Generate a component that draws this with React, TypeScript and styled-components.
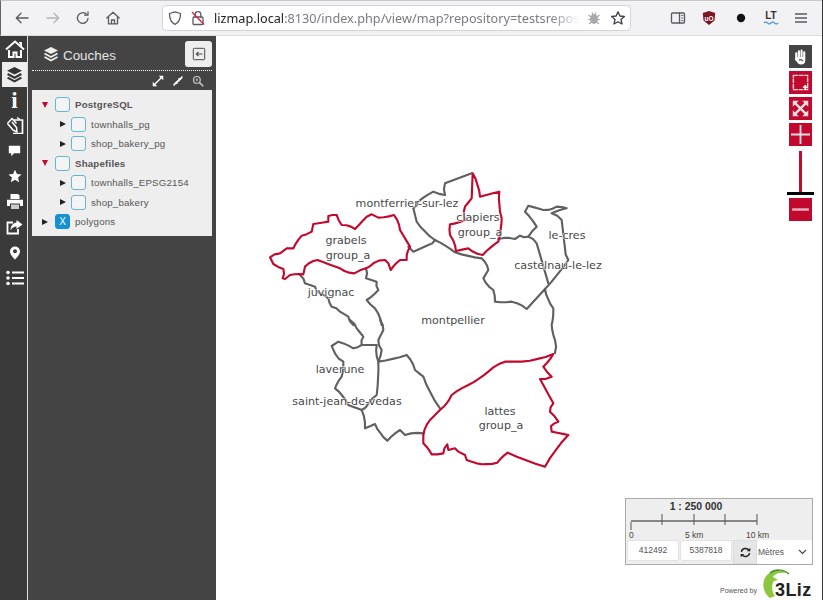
import React from "react";
import styled, { createGlobalStyle } from "styled-components";

const Global = createGlobalStyle`
  html, body { margin: 0; padding: 0; height: 100%; background: #fff; overflow: hidden; }
  #root { height: 100%; }
  * { box-sizing: border-box; }
`;

const Page = styled.div`
  width: 823px; height: 600px; display: flex; flex-direction: column;
  border-right: 1px solid #333; font-family: "Liberation Sans", Arial, sans-serif;
`;
const BrowserBar = styled.div`
  height: 36px; background: #f2f2f4; border-top: 1px solid #c8c8c8; border-bottom: 1px solid #ddd; border-left: 1px solid #666;
  display: flex; align-items: center; padding-left: 11px; flex: none;
`;
const NavButton = styled.div<{ $w?: number; $ml?: number }>`
  width: ${p => p.$w ?? 31}px; height: 22px; margin-left: ${p => p.$ml ?? 0}px; display: flex; align-items: center; justify-content: center; flex: none;
  svg { display: block; }
`;
const UrlBox = styled.div`
  width: 469px; height: 26px; margin-left: 30px; background: #fff; border: 1px solid #d4d4d8; border-radius: 4px;
  display: flex; align-items: center; padding-left: 3px; flex: none;
  font-family: "Noto Sans", "Open Sans", sans-serif; font-size: 12.7px; color: #7a7a80;
`;
const UrlText = styled.div`
  width: 366px; margin-left: 7px; overflow: hidden; white-space: nowrap; flex: none;
  -webkit-mask-image: linear-gradient(to right, #000 92%, transparent);
  mask-image: linear-gradient(to right, #000 92%, transparent);
  b { font-weight: 400; color: #222; }
`;
const UrlIcon = styled.div<{ $ml?: number }>`
  width: 18px; height: 18px; margin-left: ${p => p.$ml ?? 0}px; display: flex; align-items: center; justify-content: center; flex: none;
`;
const Main = styled.div`
  flex: 1; display: flex; min-height: 0;
`;
const Dock = styled.div`
  width: 28px; background: #3a3a3a; border-right: 1px solid #ddd; flex: none; padding-left: 2px;
`;
const DockItem = styled.div<{ $active?: boolean }>`
  height: 25.5px; display: flex; align-items: center; justify-content: center;
  background: ${p => (p.$active ? "#eeeeee" : "transparent")};
`;
const InfoGlyph = styled.span`
  font-family: "Liberation Serif", serif; font-weight: 700; font-size: 23px; line-height: 1; color: #fff; margin-top: 2px;
`;
const Panel = styled.div`
  width: 188px; background: #444; flex: none; padding: 0 4px; display: flex; flex-direction: column;
`;
const PanelHead = styled.div`
  height: 35px; border-bottom: 1px dotted #fff; display: flex; align-items: center; padding-left: 11px; flex: none;
  padding-top: 2px;
`;
const PanelTitle = styled.div`
  color: #e4e4e4; font-size: 13.4px; margin-left: 4px; flex: 1; margin-top: 2px;
`;
const CollapseBtn = styled.div`
  width: 27px; height: 26px; background: #eee; border-radius: 3px; display: flex; align-items: center; justify-content: center;
`;
const TreeActions = styled.div`
  height: 19px; display: flex; justify-content: flex-end; align-items: center; gap: 8px; padding-right: 8px; flex: none;
`;
const Tree = styled.div`
  background: #eeeeee; padding-top: 5px; height: 146px; flex: none;
`;
const Row = styled.div<{ $level: number }>`
  height: 19.5px; display: flex; align-items: center; padding-left: ${p => (p.$level ? 28 : 10)}px;
`;
const Arrow = styled.div<{ $open?: boolean; $level: number }>`
  flex: none; width: ${p => (p.$level ? 11 : 13)}px; display: flex; align-items: center;
  &::before {
    content: ""; display: block; width: 0; height: 0;
    ${p => p.$open
      ? "border-left: 3.5px solid transparent; border-right: 3.5px solid transparent; border-top: 6px solid #c1092e;"
      : "border-top: 3.5px solid transparent; border-bottom: 3.5px solid transparent; border-left: 6px solid #222;"}
  }
`;
const Check = styled.div<{ $filled?: boolean }>`
  width: 15px; height: 15px; border: 1px solid ${p => (p.$filled ? "#1591d3" : "#67b5cf")}; border-radius: 3px; flex: none;
  background: ${p => (p.$filled ? "#1591d3" : "#f4f4f4")};
  color: #fff; font-size: 10px; line-height: 13px; text-align: center;
`;
const Label = styled.div<{ $bold?: boolean }>`
  margin-left: 5px; font-size: 9.7px; color: #555; white-space: nowrap; letter-spacing: .2px;
  font-weight: ${p => (p.$bold ? 700 : 400)};
`;
const MapArea = styled.div`
  flex: 1; position: relative; background: #fff; overflow: hidden;
`;
const MapSvg = styled.svg`
  position: absolute; left: 0; top: 0; width: 606px; height: 564px; display: block;
`;
const MapLabel = styled.text`
  font-family: "DejaVu Sans", sans-serif; font-size: 11.1px; fill: #484848; text-anchor: middle;
  stroke: #fff; stroke-width: 1.5px; paint-order: stroke; stroke-opacity: .7;
`;
const Controls = styled.div`
  position: absolute; top: 9px; right: 10px; width: 23px; display: flex; flex-direction: column; align-items: center;
`;
const CtlBtn = styled.div<{ $dark?: boolean }>`
  width: 23px; height: 23px; background: ${p => (p.$dark ? "#444" : "#c1092e")};
  margin-top: 3px; display: flex; align-items: center; justify-content: center;
  &:first-child { margin-top: 0; }
`;
const SliderTrack = styled.div`
  width: 2.5px; height: 41px; background: #c1092e; margin-top: 5px;
`;
const SliderHandle = styled.div`
  width: 27px; height: 3px; background: #000; flex: none;
`;
const ScaleBox = styled.div`
  position: absolute; right: 9px; bottom: 35px; width: 188px; height: 67px; background: #eee; border: 1px solid #aaa;
  display: flex; flex-direction: column;
`;
const ScaleTitle = styled.div`
  font-size: 10.4px; font-weight: 700; color: #333; text-align: center; height: 14px; line-height: 14px; padding-right: 46px; margin-top: 1px; flex: none;
`;
const ScaleLine = styled.svg`
  display: block; width: 186px; height: 26px; flex: none;
`;
const ScaleLabel = styled.text`
  font-family: "Liberation Sans", sans-serif; font-size: 8.5px; fill: #444;
`;
const CoordRow = styled.div`
  display: flex; height: 24px; align-items: stretch; padding-left: 1px; flex: none;
`;
const CoordBox = styled.div<{ $w: number }>`
  width: ${p => p.$w}px; height: 21px; background: #fff; border: 1px solid #e2e2e2; border-radius: 3px; margin-right: 1px;
  font-size: 8.5px; color: #555; text-align: center; line-height: 18px;
`;
const RefreshBtn = styled.div`
  width: 24px; height: 24px; background: #e6e6e6; border: 1px solid #ddd; display: flex; align-items: center; justify-content: center; flex: none;
`;
const UnitSelect = styled.div`
  flex: 1; height: 24px; background: #fff; border-radius: 3px; font-size: 8.5px; color: #555; display: flex; align-items: center;
  justify-content: space-between; padding: 0 5px 0 1px;
`;
const Powered = styled.div`
  position: absolute; right: 2px; bottom: 0; display: flex; align-items: flex-end; width: 100px; height: 32px;
`;
const PoweredText = styled.div`
  font-size: 7px; color: #555; margin: 0 0 6px 0; white-space: nowrap; flex: none; width: 42px;
`;
const LogoWrap = styled.div`
  position: relative; width: 56px; height: 32px; flex: none;
  svg { position: absolute; left: 0; top: 0; }
`;
const LogoText = styled.div`
  position: absolute; left: 13px; bottom: 0; font-size: 18px; font-weight: 700; color: #222; letter-spacing: .4px; line-height: 19px;
`;

const stroke = { fill: "none", stroke: "#5a5a60", strokeWidth: 1.3, strokeLinecap: "round" as const, strokeLinejoin: "round" as const };

const Ico = ({ children, s = 16 }: { children: React.ReactNode; s?: number }) => (
  <svg width={s} height={s} viewBox="0 0 16 16">{children}</svg>
);

const GRAY = "#606060";
const RED = "#c1092e";

// Adds small deterministic wiggles to long segments: the traced boundaries are organic, not straight.
const wiggle = (s: string) => {
  const p = s.trim().split(/\s+/).map(t => t.split(",").map(Number));
  const out: string[] = [];
  p.forEach((a, i) => {
    out.push(`${a[0]},${a[1]}`);
    const b = p[i + 1];
    if (!b) return;
    const dx = b[0] - a[0], dy = b[1] - a[1], len = Math.hypot(dx, dy);
    if (len < 24) return;
    const n = Math.min(3, Math.floor(len / 20));
    for (let k = 1; k <= n; k++) {
      const t = k / (n + 1);
      const off = (((i * 7 + k * 5) % 5) - 2) * 1.6;
      out.push(`${(a[0] + dx * t - (dy / len) * off).toFixed(1)},${(a[1] + dy * t + (dx / len) * off).toFixed(1)}`);
    }
  });
  return "M" + out.join("L");
};

const Trace = ({ ox, oy, d, color, close }: { ox: number; oy: number; d: string; color: string; close?: boolean }) => (
  <path
    transform={`translate(${ox} ${oy}) scale(${1 / 3})`}
    d={wiggle(d) + (close ? "Z" : "")}
    fill="none" stroke={color} strokeWidth={6.4} strokeLinejoin="round" strokeLinecap="round"
  />
);

const rows = [
  { level: 0, open: true, name: "PostgreSQL", bold: true },
  { level: 1, name: "townhalls_pg" },
  { level: 1, name: "shop_bakery_pg" },
  { level: 0, open: true, name: "Shapefiles", bold: true },
  { level: 1, name: "townhalls_EPSG2154" },
  { level: 1, name: "shop_bakery" },
  { level: 0, name: "polygons", filled: true },
];

const labels: [number, number, string][] = [
  [407, 207, "montferrier-sur-lez"], [346, 244, "grabels"], [348, 259, "group_a"],
  [478, 221, "clapiers"], [480, 236, "group_a"], [567, 239, "le-cres"], [558, 269, "castelnau-le-lez"],
  [331, 296, "juvignac"], [453, 324, "montpellier"], [340, 373, "laverune"], [347, 405, "saint-jean-de-vedas"],
  [500, 415, "lattes"], [501, 429, "group_a"],
];

export default function App() {
  return (
    <Page>
      <Global />
      <BrowserBar>
        <NavButton $w={20}>
          <Ico><path {...stroke} d="M14 8H2.5M7 3.2 2.3 8 7 12.8" /></Ico>
        </NavButton>
        <NavButton $w={41}>
          <Ico><path {...stroke} stroke="#b4b4b8" d="M2 8h11.5M9 3.2 13.7 8 9 12.8" /></Ico>
        </NavButton>
        <NavButton $w={20}>
          <Ico><path {...stroke} d="M13 8.5A5.3 5.3 0 1 1 11.2 4M13 1.8v3.4H9.6" /></Ico>
        </NavButton>
        <NavButton $w={39}>
          <Ico><path {...stroke} d="M1.8 8 8 2.2 14.2 8M3.5 7v6.8h9V7M6.5 13.8V10h3v3.8" /></Ico>
        </NavButton>
        <UrlBox>
          <UrlIcon>
            <Ico><path {...stroke} d="M8 1.8 13.5 3.5C13.6 9 12 12.5 8 14.4 4 12.5 2.4 9 2.5 3.5Z" /></Ico>
          </UrlIcon>
          <UrlIcon $ml={5}>
            <Ico>
              <rect x="3" y="7" width="10" height="7.5" rx="1" {...stroke} />
              <path {...stroke} d="M5.2 7V4.5a2.8 2.8 0 0 1 5.6 0V7" />
              <path d="M2 2 14 14.5" stroke="#d7264a" strokeWidth={1.4} />
            </Ico>
          </UrlIcon>
          <UrlText><b>lizmap.local</b>:8130/index.php/view/map?repository=testsrepository</UrlText>
          <UrlIcon $ml={5}>
            <Ico>
              <ellipse cx="8" cy="9" rx="4" ry="5" fill="#a9a9ad" />
              <path d="M2.5 5 5 7M13.5 5 11 7M2 9.5h3M14 9.5h-3M3 14l2.4-2M13 14l-2.4-2M6 2.5l1 2M10 2.5l-1 2" stroke="#a9a9ad" strokeWidth={1.2} fill="none" />
            </Ico>
          </UrlIcon>
          <UrlIcon $ml={6}>
            <Ico><path {...stroke} stroke="#3e3e44" d="M8 1.8 9.9 6l4.5.5-3.4 3 1 4.5L8 11.7 4 14l1-4.5-3.4-3L6.1 6Z" /></Ico>
          </UrlIcon>
        </UrlBox>
        <NavButton $w={31} $ml={31}>
          <Ico><rect x="1.5" y="3" width="13" height="10" rx="1" {...stroke} /><path d="M9.5 3v10" {...stroke} /><path d="M11 5.5h2.5M11 8h2.5M11 10.5h2.500" stroke="#777" strokeWidth={1} /></Ico>
        </NavButton>
        <NavButton $w={32}>
          <Ico>
            <path d="M8 1 14.2 3 13.5 10.5 8 15 2.5 10.5 1.8 3Z" fill="#7d1420" />
            <text x="8" y="10.5" fontSize="6.5" fontWeight="700" fill="#fff" textAnchor="middle" fontFamily="Liberation Sans">uO</text>
          </Ico>
        </NavButton>
        <NavButton $w={31}>
          <Ico><circle cx="8" cy="8" r="4.2" fill="#111" /></Ico>
        </NavButton>
        <NavButton $w={30}>
          <svg width="18" height="18" viewBox="0 0 18 18">
            <text x="9" y="10" fontSize="10" fontWeight="700" fill="#333" textAnchor="middle" fontFamily="Liberation Sans">LT</text>
            <path d="M2 14q1.7-2 3.5 0t3.5 0 3.5 0 3.5 0" stroke="#2a7fd4" strokeWidth={1.1} fill="none" />
          </svg>
        </NavButton>
        <NavButton $w={30}>
          <Ico><path d="M2 4h12M2 8h12M2 12h12" stroke="#5a5a60" strokeWidth={1.3} /></Ico>
        </NavButton>
      </BrowserBar>
      <Main>
        <Dock>
          <DockItem>
            <svg width="20" height="18" viewBox="0 0 20 18">
              <path d="M1 9.5 10 1.5l9 8" fill="none" stroke="#fff" strokeWidth={2} />
              <path d="M14 2.5h2.5v4" fill="#fff" stroke="#fff" />
              <path d="M4 10v7h4.500v-4.500h3V17H16v-7" fill="none" stroke="#fff" strokeWidth={2} />
            </svg>
          </DockItem>
          <DockItem $active>
            <Ico s={17}>
              <path d="M8 1 15 4.500 8 8 1 4.500Z" fill="#333" />
              <path d="M1.500 7.500 8 11l6.500-3.500M1.500 11 8 14.500 14.500 11" fill="none" stroke="#333" strokeWidth={2} />
            </Ico>
          </DockItem>
          <DockItem><InfoGlyph>i</InfoGlyph></DockItem>
          <DockItem>
            <svg width="18" height="18" viewBox="0 0 18 18">
              <path d="M8 4h8.500v13.500H7" fill="none" stroke="#fff" strokeWidth={1.700} />
              <path d="M1.500 7.500 6 2.500 10.500 7.500 M1.500 7.500 7 14 11 16 10.500 11.500 6 6" fill="#3a3a3a" stroke="#fff" strokeWidth={1.500} strokeLinejoin="round" />
              <path d="M11 1.500 14 3.500" stroke="#fff" strokeWidth={1.500} />
            </svg>
          </DockItem>
          <DockItem>
            <Ico s={13}><path d="M1 2h14v9.500H7.500L4 15v-3.500H1Z" fill="#fff" /></Ico>
          </DockItem>
          <DockItem>
            <Ico s={14}><path d="M8 .8 10.200 5.700 15.500 6.300 11.500 9.800 12.700 15 8 12.300 3.300 15 4.500 9.800.5 6.300 5.800 5.700Z" fill="#fff" /></Ico>
          </DockItem>
          <DockItem>
            <svg width="18" height="17" viewBox="0 0 18 17">
              <path d="M4.500 6V1h7.500l1.500 1.500V6Z" fill="#fff" />
              <path d="M1 6.800h16V13h-3v-2.500H4V13H1Z" fill="#fff" />
              <rect x="5" y="11.500" width="8" height="4.500" fill="#ccc" />
            </svg>
          </DockItem>
          <DockItem>
            <svg width="17" height="16" viewBox="0 0 17 16">
              <path d="M7 3.500H1.500v11H12V10" fill="none" stroke="#fff" strokeWidth={1.800} />
              <path d="M10.500 1 16.500 5.500 10.500 10V7.500C8 7.500 6 8.500 4.500 11.500 4.500 7 7 3.800 10.500 3.500Z" fill="#fff" />
            </svg>
          </DockItem>
          <DockItem>
            <svg width="12" height="14" viewBox="0 0 12 14">
              <path d="M6 .5a5 5 0 0 1 5 5C11 9 6 13.500 6 13.500S1 9 1 5.500a5 5 0 0 1 5-5Z" fill="#fff" />
              <circle cx="6" cy="5.300" r="2" fill="#3a3a3a" />
            </svg>
          </DockItem>
          <DockItem>
            <svg width="18" height="16" viewBox="0 0 18 16">
              <path d="M6 2.500h12M6 8h12M6 13.500h12" stroke="#fff" strokeWidth={2.200} />
              <circle cx="2" cy="2.500" r="1.800" fill="#fff" /><circle cx="2" cy="8" r="1.800" fill="#fff" /><circle cx="2" cy="13.500" r="1.800" fill="#fff" />
            </svg>
          </DockItem>
        </Dock>
        <Panel>
          <PanelHead>
            <Ico s={16}>
              <path d="M8 1 15 4.500 8 8 1 4.500Z" fill="#eee" />
              <path d="M1.500 7.500 8 11l6.500-3.500M1.500 11 8 14.500 14.500 11" fill="none" stroke="#eee" strokeWidth={1.800} />
            </Ico>
            <PanelTitle>Couches</PanelTitle>
            <CollapseBtn>
              <Ico s={14}>
                <rect x="1.500" y="1.500" width="13" height="13" rx="1" fill="none" stroke="#444" strokeWidth={1.100} />
                <path d="M12 8H5M7.500 5.500 5 8l2.500 2.500" fill="none" stroke="#444" strokeWidth={1.200} />
              </Ico>
            </CollapseBtn>
          </PanelHead>
          <TreeActions>
            <Ico s={12}><path d="M3 13 13 3" stroke="#fff" strokeWidth={2} /><path d="M1 15V9L7 15ZM15 1v6L9 1Z" fill="#fff" /></Ico>
            <Ico s={12}><path d="M2 14 14 2" stroke="#fff" strokeWidth={2} /><path d="M7.500 6.500V12H2ZM8.500 9.500V4H14Z" fill="#fff" /></Ico>
            <Ico s={12}>
              <circle cx="6.500" cy="6.500" r="4.500" fill="none" stroke="#ccc" strokeWidth={1.500} />
              <path d="M10 10 15 15" stroke="#ccc" strokeWidth={2} /><path d="M4.500 6.500h4M6.500 4.500v4" stroke="#ccc" />
            </Ico>
          </TreeActions>
          <Tree>
            {rows.map(r => (
              <Row key={r.name} $level={r.level}>
                <Arrow $open={r.open} $level={r.level} />
                <Check $filled={r.filled}>{r.filled ? "X" : ""}</Check>
                <Label $bold={r.bold}>{r.name}</Label>
              </Row>
            ))}
          </Tree>
        </Panel>
        <MapArea>
          <MapSvg viewBox="216 36 606 564">
            <Trace ox={260} oy={165} color={GRAY} d="120,330 135,355 165,365 180,385 205,400 215,425 240,440 265,455 280,480" />
            <Trace ox={260} oy={165} color={GRAY} d="318,310 318,340 350,350 355,375 320,405 345,430 365,480" />
            <Trace ox={400} oy={165} color={GRAY} d="25,245 40,260 85,240 105,225 165,262 245,280 265,315 250,340 280,375 285,410 335,410 380,432 435,372 460,430 455,480 465,525 465,564" />
            <Trace ox={400} oy={165} color={GRAY} d="105,225 50,170 40,130 55,110 100,80 135,90 135,55 215,25" />
            <Trace ox={400} oy={165} color={GRAY} d="295,222 345,222 360,212 385,215 410,185 375,140 385,122 430,135 470,125 500,130 455,145 485,165 495,250 505,285 435,372" />
            <Trace ox={400} oy={165} color={GRAY} d="385,215 410,235 445,355" />
            <Trace ox={280} oy={320} color={GRAY} d="210,0 230,25 250,50 245,75 220,85 175,65 155,78 165,100 190,125 185,170 165,205 205,255 245,270 265,250 290,225 295,125 290,75 245,75" />
            <Trace ox={280} oy={320} color={GRAY} d="300,0 310,30 295,60 305,90 295,125 380,105 405,150 430,170 480,265" />
            <Trace ox={280} oy={320} color={GRAY} d="245,270 255,325 285,312 322,362 360,330 375,345 430,340" />
            <Trace ox={260} oy={165} color={RED} close d="30,277 60,265 80,250 100,250 125,212 155,200 160,177 205,170 205,153 230,150 245,180 285,192 320,155 335,148 355,158 402,150 420,195 450,245 440,285 420,285 392,315 385,295 375,285 340,295 318,310 283,325 240,310 172,285 135,305 130,328 90,330 75,342 68,340 70,312 40,297" />
            <Trace ox={400} oy={165} color={RED} close d="218,25 240,95 298,80 305,160 295,230 248,270 205,250 168,258 150,210 150,178 195,165 195,125 215,100" />
            <Trace ox={410} oy={340} color={RED} close d="40,285 60,240 90,210 125,165 175,135 235,95 285,65 335,65 430,42 400,80 425,110 390,117 430,190 420,215 445,245 423,258 425,275 475,285 405,380 293,338 262,368 200,370 170,360 165,345 145,335 135,325 115,330 112,313 100,340 65,343 40,310" />
            {labels.map(([x, y, t], i) => (
              <MapLabel key={i} x={x} y={y}>{t}</MapLabel>
            ))}
          </MapSvg>
          <Controls>
            <CtlBtn $dark>
              <Ico s={17}>
                <path d="M4 9V5M6.500 8V3M9 8V2.500M11.500 8.500V4" stroke="#fff" strokeWidth={2} strokeLinecap="round" />
                <path d="M4 8.500h8.500V12c0 2-1.500 3.500-4 3.500-2.200 0-3-1-4-2.500L2.500 10.500" fill="#fff" />
                <path d="M6.500 11.500c1.500-1 3-.5 3.500 1" stroke="#444" fill="none" strokeWidth={1.100} />
              </Ico>
            </CtlBtn>
            <CtlBtn>
              <Ico s={19}>
                <path d="M2 2h12v12H2Z" fill="none" stroke="#f3d6dc" strokeWidth={1.200} strokeDasharray="4 .6" />
                <path d="M10 12h4M12 10v4" stroke="#fff" strokeWidth={1.400} />
              </Ico>
            </CtlBtn>
            <CtlBtn>
              <Ico s={19}>
                <path d="M1.500 1.500h5l-5 5ZM14.500 1.500h-5l5 5ZM1.500 14.500h5l-5-5ZM14.500 14.500h-5l5-5Z" fill="#f6dfe4" />
                <path d="M3 3 13 13M13 3 3 13" stroke="#f6dfe4" strokeWidth={2} />
              </Ico>
            </CtlBtn>
            <CtlBtn>
              <Ico s={19}><path d="M0 8h16M8 0v16" stroke="#f6dfe4" strokeWidth={1.500} /></Ico>
            </CtlBtn>
            <SliderTrack />
            <SliderHandle />
            <CtlBtn>
              <Ico s={19}><path d="M1 8h14" stroke="#f0b8c4" strokeWidth={2} /></Ico>
            </CtlBtn>
          </Controls>
          <ScaleBox>
            <ScaleTitle>1 : 250 000</ScaleTitle>
            <ScaleLine viewBox="0 0 186 26">
              <path d="M5 7H131" stroke="#222" strokeWidth={1} />
              <path d="M5 8V16M36 0V11M68 0V11M99 0V11M131 0V11" stroke="#555" strokeWidth={1} />
              <ScaleLabel x="3" y="24">0</ScaleLabel>
              <ScaleLabel x="59" y="24">5 km</ScaleLabel>
              <ScaleLabel x="120" y="24">10 km</ScaleLabel>
            </ScaleLine>
            <CoordRow>
              <CoordBox $w={52}>412492</CoordBox>
              <CoordBox $w={52}>5387818</CoordBox>
              <RefreshBtn>
                <Ico s={11}>
                  <path d="M2 7a6 6 0 0 1 11-2M14 9a6 6 0 0 1-11 2" fill="none" stroke="#222" strokeWidth={2} />
                  <path d="M15 1v5h-5ZM1 15v-5h5Z" fill="#222" />
                </Ico>
              </RefreshBtn>
              <UnitSelect>
                <span>Mètres</span>
                <svg width="9" height="6" viewBox="0 0 9 6"><path d="M1 1l3.500 3.500L8 1" fill="none" stroke="#444" strokeWidth={1.100} /></svg>
              </UnitSelect>
            </CoordRow>
          </ScaleBox>
          <Powered>
            <PoweredText>Powered by</PoweredText>
            <LogoWrap>
              <svg width="56" height="32" viewBox="0 0 56 32">
                <path d="M8 30C0 24-1 12 6 6c5-4 13-5 19-1-6-1-12 0-14 4l5 3-4 1c-3 4-2 11 1 15Z" fill="#8cc63f" />
                <path d="M8 5c5-4 14-4 19 1" fill="none" stroke="#3f8f2a" strokeWidth={1.500} />
              </svg>
              <LogoText>3Liz</LogoText>
            </LogoWrap>
          </Powered>
        </MapArea>
      </Main>
    </Page>
  );
}
